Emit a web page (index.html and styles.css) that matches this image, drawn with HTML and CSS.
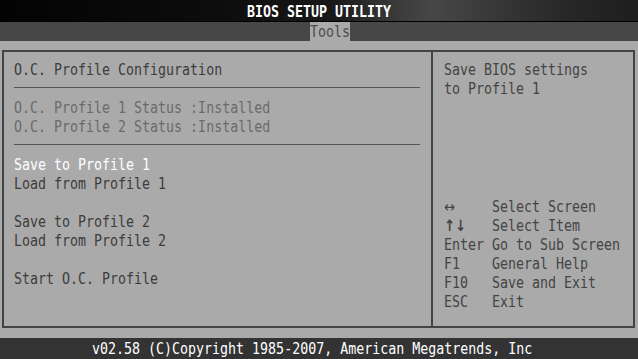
FILE: index.html
```html
<!DOCTYPE html>
<html>
<head>
	<title>BIOS Setup Utility</title>
	<link rel="stylesheet" href="styles.css">
</head>
<body>
	<section class="bios">
		<div class="title-bar">
			<span class="row">BIOS SETUP UTILITY</span>
		</div>
		<div class="tab-bar">
			<div class="tab"><span class="row">Tools</span></div>
		</div>

		<div class="main">
			<div class="left-panel">
				<div class="row">O.C. Profile Configuration</div>
				<div class="sep"></div>
				<div class="row disabled">O.C. Profile 1 Status :Installed</div>
				<div class="row disabled">O.C. Profile 2 Status :Installed</div>
				<div class="sep"></div>
				<div class="row selected">Save to Profile 1</div>
				<div class="row">Load from Profile 1</div>
				<div class="row"></div>
				<div class="row">Save to Profile 2</div>
				<div class="row">Load from Profile 2</div>
				<div class="row"></div>
				<div class="row">Start O.C. Profile</div>
			</div>

			<div class="right-panel">
				<div class="help">
					<div class="row">Save BIOS settings</div>
					<div class="row">to Profile 1</div>
				</div>
				<div class="keys">
					<div class="row"><span class="key arrow">&#8596;</span>Select Screen</div>
					<div class="row"><span class="key arrow bold">&#8593;&#8595;</span>Select Item</div>
					<div class="row"><span class="key">Enter</span>Go to Sub Screen</div>
					<div class="row"><span class="key">F1</span>General Help</div>
					<div class="row"><span class="key">F10</span>Save and Exit</div>
					<div class="row"><span class="key">ESC</span>Exit</div>
				</div>
			</div>
		</div>

		<div class="footer">
			<span class="row">v02.58 (C)Copyright 1985-2007, American Megatrends, Inc</span>
		</div>
	</section>
</body>
</html>
```

FILE: styles.css
```css
*{
	margin: 0;
	padding: 0;
	box-sizing: border-box;
	font-family: "DejaVu Sans Mono", "Liberation Mono", monospace;
}
body{
	background: #aaa;
}
.bios{
	width: 638px;
	height: 359px;
	background: #aaa;
	overflow: hidden;
	font-size: 13.3px;
	color: #3c3c3c;
}
.row{
	display: block;
	height: 19px;
	line-height: 19px;
	white-space: pre;
	transform: scaleY(1.2);
}
.title-bar{
	height: 22px;
	border-bottom: solid 1px #000;
	background: linear-gradient(to right, #030303 0%, #0d0d0d 35%, #181818 52%, #3a3a3a 62%, #474747 68%, #3a3a3a 76%, #282828 88%, #1e1e1e 100%);
	text-align: center;
	color: #fff;
	font-weight: bold;
	padding-top: 2px;
}
.title-bar .row{
	display: inline-block;
}
.tab-bar{
	height: 19px;
	background: #474747;
	padding-left: 310px;
	margin-bottom: 9px;
}
.tab{
	width: 40px;
	height: 19px;
	background: #aaa;
	color: #4c4c4c;
}
.main{
	display: flex;
	width: 633px;
	height: 278px;
	margin-left: 2px;
	border: solid 2px #444;
}
.left-panel{
	width: 429px;
	padding: 8px 0 0 10px;
	border-right: solid 2px #444;
}
.sep{
	height: 1px;
	background: #555;
	margin: 8px 11px 10px 0;
}
.disabled{
	color: #6a6a6a;
}
.selected{
	color: #fff;
}
.right-panel{
	flex: 1;
	display: flex;
	flex-direction: column;
	padding: 8px 0 15px 11px;
	color: #444;
}
.keys{
	margin-top: auto;
}
.key{
	display: inline-block;
	width: 48px;
}
.arrow{
	font-family: "DejaVu Sans", sans-serif;
	font-size: 13px;
}
.bold{
	font-weight: bold;
}
.footer{
	height: 21px;
	margin-top: 10px;
	background: #333;
	color: #fff;
	padding: 1px 0 0 92px;
}
```
